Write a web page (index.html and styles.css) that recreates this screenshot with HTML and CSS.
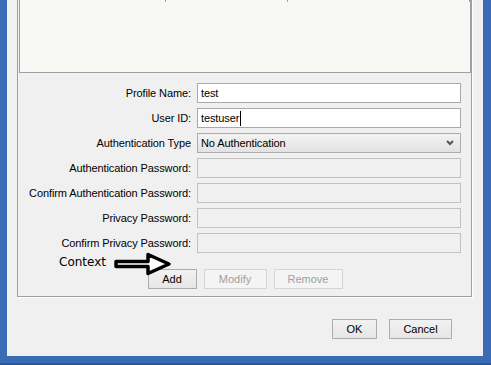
FILE: index.html
```html
<!DOCTYPE html>
<html lang="en">
<head>
    <meta charset="UTF-8">
    <title>SNMP Profile</title>
    <link rel="stylesheet" href="styles.css">
</head>
<body>
    <div class="frame">
        <div class="dialog">
            <div class="group">
                <!-- table with the existing profiles, scrolled off the top -->
                <div class="table">
                    <div class="table-head">
                        <div class="col"></div>
                        <div class="col"></div>
                        <div class="col"></div>
                    </div>
                    <div class="table-body"></div>
                </div>

                <div class="form">
                    <label class="label">Profile Name:</label>
                    <div class="field">test</div>

                    <label class="label">User ID:</label>
                    <div class="field">testuser<span class="caret"></span></div>

                    <label class="label">Authentication Type</label>
                    <div class="field combo">
                        No Authentication
                        <svg class="chevron" width="8" height="6" viewBox="0 0 8 6">
                            <path d="M1 1 L4 4 L7 1" fill="none" stroke="#555" stroke-width="2"/>
                        </svg>
                    </div>

                    <label class="label">Authentication Password:</label>
                    <div class="field disabled"></div>

                    <label class="label">Confirm Authentication Password:</label>
                    <div class="field disabled"></div>

                    <label class="label">Privacy Password:</label>
                    <div class="field disabled"></div>

                    <label class="label">Confirm Privacy Password:</label>
                    <div class="field disabled"></div>
                </div>

                <div class="actions">
                    <!-- annotation drawn on top of the screenshot -->
                    <span class="note">Context</span>
                    <svg class="arrow" width="60" height="24" viewBox="0 0 60 24">
                        <polygon points="3,9.5 35,9.5 35,2.5 56,12 35,21.5 35,14.5 3,14.5"
                                 fill="#fff" stroke="#000" stroke-width="3.5" stroke-linejoin="round"/>
                    </svg>

                    <button class="btn btn-add">Add</button>
                    <button class="btn btn-modify" disabled>Modify</button>
                    <button class="btn btn-remove" disabled>Remove</button>
                </div>
            </div>

            <div class="footer">
                <button class="btn btn-ok">OK</button>
                <button class="btn btn-cancel">Cancel</button>
            </div>
        </div>
    </div>
</body>
</html>
```

FILE: styles.css
```css
body {
    margin: 0;
    padding: 0;
    font-family: "Liberation Sans", Arial, sans-serif;
    font-size: 11px;
    letter-spacing: -0.1px;
    color: #000;
    background: #3a6cb6;
}
.frame {
    width: 491px;
    height: 365px;
    box-sizing: border-box;
    padding: 0 8px 9px 7px;
    background: #3a6cb6;
    border-bottom: 2px solid #2a5596;
    overflow: hidden;
}
.dialog {
    height: 356px;
    box-sizing: border-box;
    padding: 0 11px 0 10px;
    background: #f0f0f0;
    display: flex;
    flex-direction: column;
}
.group {
    margin-top: -10px;
    padding: 0 0 7px 1px;
    border: 1px solid #a0a0a0;
    box-shadow: 1px 1px 0 #fff;
}
.table {
    border: 1px solid #a0a0a0;
    border-top: none;
    background: #f8f9f4;
}
.table-head {
    display: grid;
    grid-template-columns: 146px 122px 182px;
    height: 11px;
}
.table-head .col {
    border-right: 1px solid #a0a0a0;
}
.table-body {
    height: 70px;
}
.form {
    display: grid;
    grid-template-columns: 172px 264px;
    grid-auto-rows: 20px;
    column-gap: 6px;
    row-gap: 5px;
    margin-top: 10px;
}
.label {
    display: flex;
    align-items: center;
    justify-content: flex-end;
    white-space: nowrap;
}
.field {
    box-sizing: border-box;
    border: 1px solid #a9a9a9;
    background: #fff;
    padding: 0 2px 0 3px;
    display: flex;
    align-items: center;
}
.caret {
    display: inline-block;
    width: 1px;
    height: 15px;
    margin-left: 1px;
    background: #000;
}
.combo {
    justify-content: space-between;
    background: linear-gradient(#f3f3f3, #e2e2e2);
    border-color: #acacac;
    padding-right: 6px;
}
.disabled {
    background: #f0f0f0;
    border-color: #c2c2c2;
}
.actions {
    position: relative;
    display: flex;
    justify-content: center;
    gap: 7px;
    margin-top: 16px;
}
.note {
    position: absolute;
    left: 40px;
    top: -14px;
    font-family: "DejaVu Sans", Verdana, sans-serif;
    font-size: 12px;
    line-height: 14px;
    letter-spacing: 0;
}
.arrow {
    position: absolute;
    left: 94px;
    top: -17px;
}
.btn {
    height: 20px;
    box-sizing: border-box;
    padding: 0;
    font-family: "Liberation Sans", Arial, sans-serif;
    font-size: 11px;
    color: #000;
    border: 1px solid #acacac;
    background: linear-gradient(#f2f2f2, #e6e6e6);
}
.btn:disabled {
    color: #a0a0a0;
    border-color: #d5d5d5;
    background: #f4f4f4;
}
.btn-add { width: 49px; }
.btn-modify { width: 63px; }
.btn-remove { width: 69px; }
.footer {
    display: flex;
    justify-content: flex-end;
    gap: 12px;
    margin: 22px 20px 0 0;
}
.btn-ok { width: 45px; }
.btn-cancel { width: 63px; }
```
